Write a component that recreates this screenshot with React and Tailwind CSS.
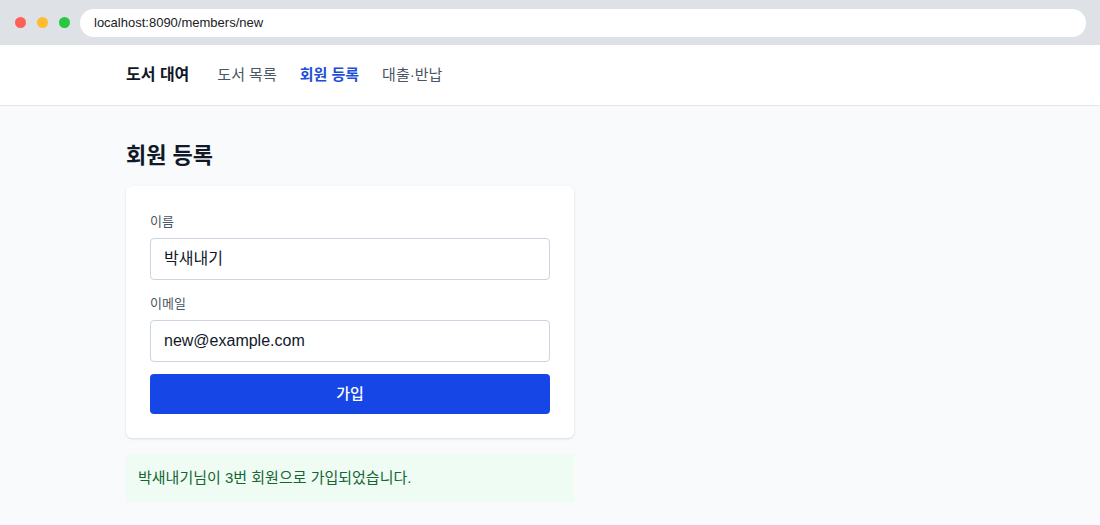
import React from "react";

const font = "font-['Liberation_Sans','Noto_Sans_CJK_KR',sans-serif]";

export default function App() {
  return (
    <div className={`min-h-screen bg-[#f8fafc] text-[#111827] ${font}`}>
      {/* Browser chrome */}
      <div className="h-[45px] bg-[#dee1e6] flex items-center px-[15px]">
        <div className="flex items-center gap-[11px]">
          <span className="w-[11px] h-[11px] rounded-full bg-[#fe5f57]"></span>
          <span className="w-[11px] h-[11px] rounded-full bg-[#febc2e]"></span>
          <span className="w-[11px] h-[11px] rounded-full bg-[#28c840]"></span>
        </div>
        <div className="ml-[10px] flex-1 h-[28px] mr-[-1px] bg-white rounded-full flex items-center px-[14px] text-[13px] text-[#202124]">
          localhost:8090/members/new
        </div>
      </div>

      {/* Nav */}
      <header className="h-[61px] bg-white border-b border-[#e5e7eb] flex items-center pl-[126px]">
        <span className="text-[16px] font-bold text-[#111827]">도서 대여</span>
        <nav className="flex items-center gap-[23px] ml-[28px] text-[15px]">
          <span className="text-[#4b5563]">도서 목록</span>
          <span className="text-[#1d4ed8] font-semibold">회원 등록</span>
          <span className="text-[#4b5563]">대출·반납</span>
        </nav>
      </header>

      {/* Main */}
      <main className="pl-[126px] pt-[36px]">
        <h1 className="text-[22px] leading-[28px] font-bold mb-[16px]">회원 등록</h1>
        <div className="w-[448px] bg-white rounded-md shadow-sm px-[24px] pt-[26px] pb-[24px]">
          <label className="block text-[13px] leading-[20px] text-[#4b5563] mb-[6px]">이름</label>
          <div className="h-[42px] border border-[#cbd5e1] rounded-[4px] flex items-center px-[13px] text-[16px]">
            박새내기
          </div>
          <label className="block text-[13px] leading-[20px] text-[#4b5563] mt-[14px] mb-[6px]">이메일</label>
          <div className="h-[42px] border border-[#cbd5e1] rounded-[4px] flex items-center px-[13px] text-[16px]">
            new@example.com
          </div>
          <button className="mt-[12px] w-full h-[40px] bg-[#1746e6] text-white rounded-[4px] text-[15px] font-medium">
            가입
          </button>
        </div>
        <div className="w-[448px] mt-[16px] bg-[#effcf3] text-[#166534] text-[15px] leading-[20px] px-[12px] py-[14px]">
          박새내기님이 3번 회원으로 가입되었습니다.
        </div>
      </main>
    </div>
  );
}
